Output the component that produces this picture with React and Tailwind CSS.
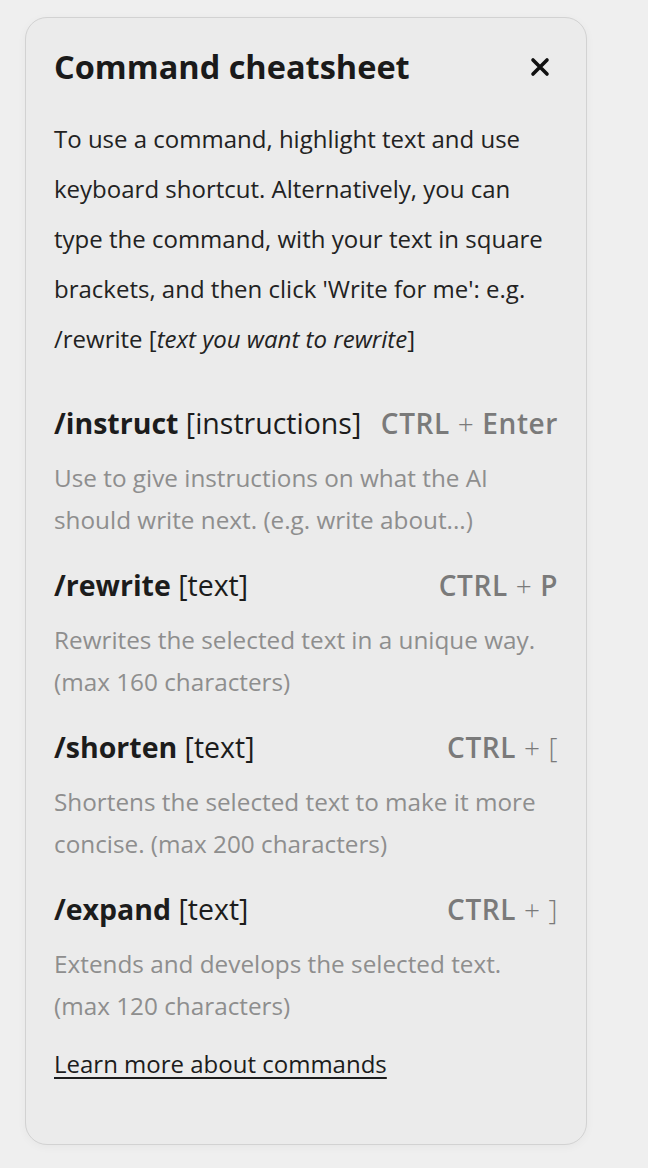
import React from 'react';

const commands = [
  {
    name: '/instruct',
    arg: '[instructions]',
    key: 'Enter',
    desc: ['Use to give instructions on what the AI', 'should write next. (e.g. write about...)'],
  },
  {
    name: '/rewrite',
    arg: '[text]',
    key: 'P',
    desc: ['Rewrites the selected text in a unique way.', '(max 160 characters)'],
  },
  {
    name: '/shorten',
    arg: '[text]',
    key: '[',
    thinKey: true,
    desc: ['Shortens the selected text to make it more', 'concise. (max 200 characters)'],
  },
  {
    name: '/expand',
    arg: '[text]',
    key: ']',
    thinKey: true,
    desc: ['Extends and develops the selected text.', '(max 120 characters)'],
  },
];

const CommandRow = ({ name, arg, keyName, thinKey, desc }) => (
  <div className="mb-[24px]">
    <div className="flex items-center justify-between h-[40px] leading-[40px]">
      <span className="text-[28.5px] text-[#1c1c1c] whitespace-nowrap">
        <span className="font-bold">{name}</span> <span>{arg}</span>
      </span>
      <span className="text-[28px] tracking-[0.6px] text-[#7a7a7a] whitespace-nowrap">
        <span className="font-semibold">CTRL</span> <span className="font-light">+</span>{' '}
        <span className={thinKey ? 'font-light' : 'font-semibold'}>{keyName}</span>
      </span>
    </div>
    <div className="mt-[14px] text-[24.3px] leading-[42px] text-[#8e8e8e]">
      {desc.map((line) => (
        <div key={line} className="whitespace-nowrap">{line}</div>
      ))}
    </div>
  </div>
);

export default function App() {
  return (
    <div
      className="min-h-[1168px] bg-[#efefef] pt-[17px] pl-[25px]"
      style={{ fontFamily: '"Open Sans", "Noto Sans", sans-serif' }}
    >
      <div className="w-[562px] h-[1128px] rounded-[22px] border border-[#d2d2d2] bg-[#ebebeb] shadow-[0_2px_10px_rgba(0,0,0,0.04)] pl-[28px] pr-[28px] pt-[28px]">
        {/* Header */}
        <div className="flex items-center justify-between h-[42px]">
          <h1 className="text-[32.5px] font-bold text-[#1a1a1a] leading-none">Command cheatsheet</h1>
          <button className="mr-[8px] text-[#111]" title="Close">
            <svg width="20" height="20" viewBox="0 0 20 20">
              <path d="M3 3 L17 17 M17 3 L3 17" stroke="currentColor" strokeWidth="3.6" strokeLinecap="round" />
            </svg>
          </button>
        </div>

        <p className="mt-[26px] text-[24px] leading-[50px] text-[#222]">
          To use a command, highlight text and use keyboard shortcut. Alternatively, you can type the
          command, with your text in square brackets, and then click 'Write for me': e.g.{' '}
          /rewrite [<em>text you want to rewrite</em>]
        </p>

        <div className="mt-[39px]">
          {commands.map((c) => (
            <CommandRow
              key={c.name}
              name={c.name}
              arg={c.arg}
              keyName={c.key}
              thinKey={c.thinKey}
              desc={c.desc}
            />
          ))}
        </div>

        <a href="#" className="block -mt-[2px] text-[24px] leading-[30px] text-[#1c1c1c] underline underline-offset-[4px]">
          Learn more about commands
        </a>
      </div>
    </div>
  );
}
